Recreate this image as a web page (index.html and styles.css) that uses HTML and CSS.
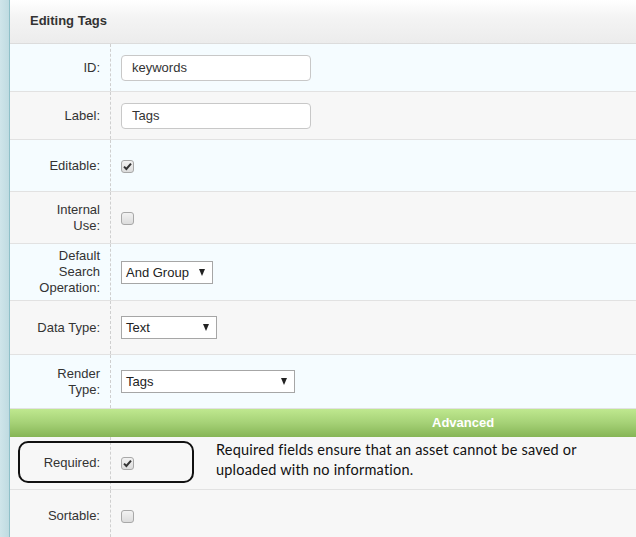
FILE: index.html
```html
<!DOCTYPE html>
<html>
<head>
<meta charset="utf-8">
<link rel="stylesheet" href="styles.css">
</head>
<body>
<div class="page">
  <div class="strip"></div>
  <div class="panel">
    <div class="header">Editing Tags</div>

    <div class="row blue h47">
      <div class="label">ID:</div>
      <div class="value"><div class="text-input">keywords</div></div>
    </div>
    <div class="row grey h47">
      <div class="label">Label:</div>
      <div class="value"><div class="text-input">Tags</div></div>
    </div>
    <div class="row blue h51">
      <div class="label">Editable:</div>
      <div class="value"><span class="checkbox checked"><svg viewBox="0 0 13 13" width="13" height="13"><path d="M3 6.6 L5.4 9 L10 3.6" fill="none" stroke="#333" stroke-width="2"/></svg></span></div>
    </div>
    <div class="row grey h51">
      <div class="label">Internal<br>Use:</div>
      <div class="value"><span class="checkbox"></span></div>
    </div>
    <div class="row blue h56">
      <div class="label">Default<br>Search<br>Operation:</div>
      <div class="value"><div class="select w92">And Group<span class="arrow"></span></div></div>
    </div>
    <div class="row grey h53">
      <div class="label">Data Type:</div>
      <div class="value"><div class="select w96">Text<span class="arrow"></span></div></div>
    </div>
    <div class="row blue h53">
      <div class="label">Render<br>Type:</div>
      <div class="value"><div class="select w174">Tags<span class="arrow"></span></div></div>
    </div>

    <div class="section">Advanced</div>

    <div class="row grey h52 annotated">
      <div class="label">Required:</div>
      <div class="value"><span class="checkbox checked"><svg viewBox="0 0 13 13" width="13" height="13"><path d="M3 6.6 L5.4 9 L10 3.6" fill="none" stroke="#333" stroke-width="2"/></svg></span>
        <p class="note">Required fields ensure that an asset cannot be saved or<br>uploaded with no information.</p>
      </div>
      <div class="callout"></div>
    </div>
    <div class="row grey h52">
      <div class="label">Sortable:</div>
      <div class="value"><span class="checkbox"></span></div>
    </div>
  </div>
</div>
</body>
</html>
```

FILE: styles.css
```css
html, body {
  margin: 0;
  padding: 0;
  background: #f7f7f7;
}
body {
  font-family: "Liberation Sans", Arial, sans-serif;
  font-size: 13px;
  color: #333;
}
.page {
  display: flex;
  min-height: 537px;
  overflow: hidden;
}
.strip {
  width: 9px;
  flex: none;
  background: linear-gradient(90deg, #cfe5ea, #bfdbe1);
  border-right: 1px solid #8fc0c8;
}
.panel {
  flex: 1;
  display: flex;
  flex-direction: column;
}
.header {
  height: 44px;
  box-sizing: border-box;
  padding: 13px 0 0 20px;
  font-weight: bold;
  font-size: 13px;
  color: #333;
  background: linear-gradient(#ffffff, #f4f4f4 40%, #ececec);
  border-bottom: 1px solid #dcdcdc;
}
.row {
  display: grid;
  grid-template-columns: 101px 1fr;
  border-bottom: 1px solid #e2e2e2;
  position: relative;
}
.blue { background: #f5fcff; }
.grey { background: #f7f7f7; }
.h47 { height: 47px; }
.h51 { height: 51px; }
.h52 { height: 52px; }
.h53 { height: 53px; }
.h56 { height: 56px; }
.label {
  display: flex;
  align-items: center;
  justify-content: flex-end;
  text-align: right;
  padding-right: 10px;
  line-height: 16px;
  border-right: 1px dashed #cfcfcf;
  box-sizing: border-box;
}
.value {
  display: flex;
  align-items: center;
  padding-left: 10px;
}
.text-input {
  width: 190px;
  height: 26px;
  box-sizing: border-box;
  border: 1px solid #c8c8c8;
  border-radius: 4px;
  background: #fff;
  padding-left: 10px;
  line-height: 24px;
  font-size: 13px;
  color: #333;
}
.checkbox {
  width: 13px;
  height: 13px;
  box-sizing: border-box;
  border: 1px solid #a8a8a8;
  border-radius: 3px;
  background: linear-gradient(#f2f2f2, #dcdcdc);
  display: inline-flex;
  margin-top: 1px;
}
.checkbox svg {
  margin: -1px;
}
.select {
  height: 23px;
  box-sizing: border-box;
  border: 1px solid #a6a6a6;
  background: #fff;
  display: flex;
  align-items: center;
  justify-content: space-between;
  padding: 0 5px 0 4px;
  font-size: 13px;
  color: #222;
}
.w92 { width: 92px; }
.w96 { width: 96px; }
.w174 { width: 174px; }
.arrow {
  width: 0;
  height: 0;
  border-left: 3.5px solid transparent;
  border-right: 3.5px solid transparent;
  border-top: 7px solid #222;
  margin-right: 2px;
}
.section {
  height: 28px;
  box-sizing: border-box;
  background: linear-gradient(#bfe88f, #a5d176 50%, #86b556);
  color: #fff;
  font-weight: bold;
  font-size: 13px;
  line-height: 28px;
  padding-left: 422px;
}
.note {
  margin: -7px 0 0 82px;
  font-family: Lato, "Open Sans", sans-serif;
  font-size: 14.5px;
  letter-spacing: 0.2px;
  line-height: 20px;
  color: #111;
}
.callout {
  position: absolute;
  left: 8px;
  top: 4px;
  width: 176px;
  height: 42px;
  box-sizing: border-box;
  border: 2px solid #111;
  border-radius: 10px;
}
```
